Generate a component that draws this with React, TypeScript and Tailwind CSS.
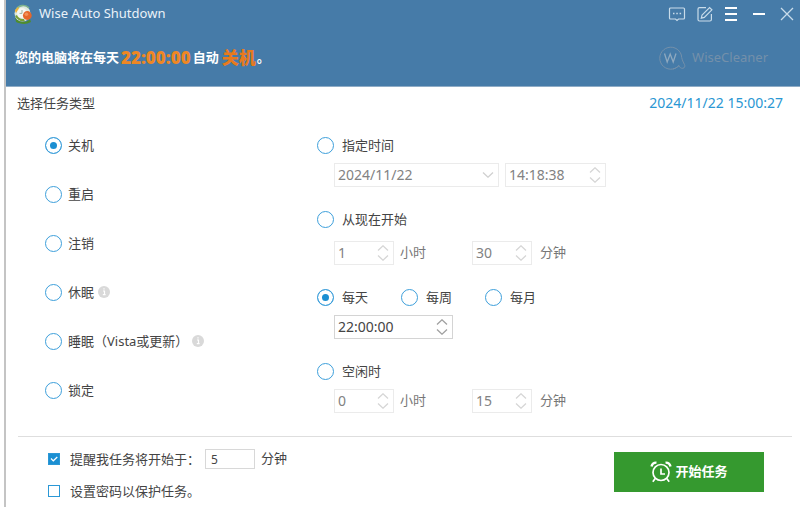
import { useState } from "react";
import type { ReactNode } from "react";
import clsx from "clsx";

const tasks = [
  { id: "shutdown", label: "关机" },
  { id: "restart", label: "重启" },
  { id: "logoff", label: "注销" },
  { id: "sleep", label: "休眠", info: "休眠说明" },
  { id: "hibernate", label: "睡眠（Vista或更新）", info: "睡眠说明" },
  { id: "lock", label: "锁定" },
];

type RadioProps = {
  name: string;
  checked: boolean;
  onChange: () => void;
  gap?: string;
  children: ReactNode;
};

function Radio({ name, checked, onChange, gap = "gap-2", children }: RadioProps) {
  return (
    <label className={clsx("flex items-center leading-5", gap)}>
      <input
        type="radio"
        name={name}
        checked={checked}
        onChange={onChange}
        className="size-[17px] shrink-0 appearance-none rounded-full border border-[#3d9fdb] bg-white checked:bg-[#1b8fd2] checked:shadow-[inset_0_0_0_4px_white]"
      />
      {children}
    </label>
  );
}

function Checkbox({ defaultChecked, children }: { defaultChecked?: boolean; children: ReactNode }) {
  return (
    <label className="flex items-center gap-[10px] leading-5">
      <span className="grid size-3 place-items-center *:col-start-1 *:row-start-1">
        <input
          type="checkbox"
          defaultChecked={defaultChecked}
          className="peer size-3 appearance-none border border-[#2b98d6] bg-white checked:bg-[#1b8fd2]"
        />
        <svg viewBox="0 0 12 12" className="pointer-events-none invisible size-3 peer-checked:visible">
          <path d="M3 5.500 5.300 7.800 9.300 4" fill="none" stroke="#fff" strokeWidth="1.200" />
        </svg>
      </span>
      {children}
    </label>
  );
}

function InfoButton({ label }: { label: string }) {
  return (
    <button type="button" aria-label={label}>
      <svg viewBox="0 0 12 12" className="size-3">
        <circle cx="6" cy="6" r="6" fill="#d9d9d9" />
        <path d="M5 5h1.5v3.5M4.8 8.7h2.8M5.4 2.9h1.2" fill="none" stroke="#fff" strokeWidth="1.2" />
      </svg>
    </button>
  );
}

function Arrow({ up }: { up?: boolean }) {
  return (
    <svg viewBox="0 0 12 6" className="h-[6px] w-3" fill="none" stroke="currentColor" strokeWidth="1.3">
      <path d={up ? "M1 5.4 6 .8l5 4.6" : "M1 .6l5 4.6L11 .6"} />
    </svg>
  );
}

type SpinnerProps = {
  label: string;
  value: string;
  width: string;
  disabled?: boolean;
};

function Spinner({ label, value, width, disabled }: SpinnerProps) {
  return (
    <div
      className={clsx(
        "flex h-6 items-center border bg-white text-sm",
        width,
        disabled ? "border-[#ebebeb] text-[#828282]" : "border-[#d4d4d4] text-[#444]"
      )}
    >
      <input
        type="text"
        aria-label={label}
        defaultValue={value}
        disabled={disabled}
        className="w-0 flex-1 bg-transparent pl-[3px]"
      />
      <div className={clsx("flex flex-col gap-1 pr-1", disabled ? "text-[#d6d6d6]" : "text-[#a0a0a0]")}>
        <button type="button" aria-label={`${label}增加`} disabled={disabled}>
          <Arrow up />
        </button>
        <button type="button" aria-label={`${label}减少`} disabled={disabled}>
          <Arrow />
        </button>
      </div>
    </div>
  );
}

function Duration({ hours, minutes }: { hours: string; minutes: string }) {
  return (
    <div className="flex items-center pl-[17px] text-[#777]">
      <Spinner label="小时" value={hours} width="w-[60px]" disabled />
      <span className="w-[78px] pl-[6px]">小时</span>
      <Spinner label="分钟" value={minutes} width="w-[60px]" disabled />
      <span className="pl-2">分钟</span>
    </div>
  );
}

function AppLogo() {
  return (
    <svg viewBox="0 0 20 20" className="size-5">
      <path d="M2 13c2 5 11 7 15 2l1 3c-5 3-11 2-15 0z" fill="#4f8d2c" />
      <circle cx="9.5" cy="9.5" r="8" fill="#dfe9df" />
      <path d="M3 6a8 8 0 0 1 13-2" fill="none" stroke="#7fb38c" strokeWidth="1.6" />
      <path d="M1.8 6.5 5 3l1 2-3 4z" fill="#f0b33a" />
      <path d="M2 12c2 4 6 6 10 5.4l-1-2.4c-3 .5-6-1-7-4z" fill="#7a9f36" />
      <circle cx="9" cy="9" r="5" fill="#f6f7f2" />
      <path d="M9 6v3.4H6.5" fill="none" stroke="#9cb6a4" strokeWidth="1" />
      <circle cx="14.3" cy="11.5" r="4.4" fill="#e5672a" />
      <circle cx="13.4" cy="10.2" r="1.8" fill="#f39158" />
    </svg>
  );
}

function TitleBar() {
  return (
    <div className="flex items-center justify-between pr-[6px] pl-[7px]">
      <div className="flex h-[27px] items-center gap-[6px]">
        <AppLogo />
        <h1 className="text-[13px] text-[#eaf2f8]">Wise Auto Shutdown</h1>
      </div>
      <div className="flex items-center gap-[10px] text-[#c9dcea]">
        <button type="button" aria-label="反馈">
          <svg viewBox="0 0 18 18" className="size-[18px]" fill="none" stroke="currentColor" strokeWidth="1.2">
            <path d="M2.5 3h13a1 1 0 0 1 1 1v9a1 1 0 0 1-1 1h-5L9 15.4 7.5 14h-5a1 1 0 0 1-1-1V4a1 1 0 0 1 1-1z" />
            <path d="M5 8.5h1.5M8.3 8.5h1.5M11.6 8.5h1.5" strokeWidth="1.6" />
          </svg>
        </button>
        <button type="button" aria-label="编辑">
          <svg viewBox="0 0 18 18" className="size-[18px]" fill="none" stroke="currentColor" strokeWidth="1.2">
            <path d="M10 2.6H3.5A1.5 1.5 0 0 0 2 4.1v10.4A1.5 1.5 0 0 0 3.5 16h10.4a1.500 1.500 0 0 0 1.500-1.500V9" />
            <path d="m6 10.2 7.6-7.7 2.3 2.3-7.6 7.6-3 .7z" />
          </svg>
        </button>
        <button type="button" aria-label="菜单" className="text-white">
          <svg viewBox="0 0 14 18" className="h-[18px] w-[14px]" stroke="currentColor" strokeWidth="2">
            <path d="M1 3h12M1 9h12M1 15h12" />
          </svg>
        </button>
        <button type="button" aria-label="最小化" className="ml-1 text-white">
          <svg viewBox="0 0 14 18" className="h-[18px] w-[14px]" stroke="currentColor" strokeWidth="2">
            <path d="M1 9h12" />
          </svg>
        </button>
        <button type="button" aria-label="关闭" className="ml-1">
          <svg viewBox="0 0 14 18" className="h-[18px] w-[14px]" stroke="currentColor" strokeWidth="1.3">
            <path d="m1 3 12 12M13 3 1 15" />
          </svg>
        </button>
      </div>
    </div>
  );
}

function Header() {
  return (
    <header className="h-[87px] border-b border-[#8facc6] bg-[#467ba8]">
      <TitleBar />
      <div className="flex h-[62px] items-center justify-between pr-8 pl-[9px]">
        <p className="flex items-center font-bold text-white">
          您的电脑将在每天
          <strong className="px-[2px] text-[17px] text-[#ee8723]">22:00:00</strong>
          自动
          <strong className="pr-px pl-[3px] text-[17px] text-[#e87a1c]">关机</strong>。
        </p>
        <div className="flex items-center gap-[6px] text-[#7490aa]">
          <svg viewBox="0 0 28 24" className="h-6 w-7" fill="none" stroke="currentColor">
            <path d="M21 19.500A11 11 0 1 1 23.300 9c.4 3.500 1.200 6 3.200 9.500.8 1.600.3 3.500-1.700 3.800-2 .2-3-.9-3.800-2.800-1.500 1.600-3.500 3-6 3.500" />
            <path d="m6.500 7.500 2.700 8.500 3-8 3 8L18 7.500" stroke="#8fa9bf" strokeWidth="1.300" />
          </svg>
          <span>WiseCleaner</span>
        </div>
      </div>
    </header>
  );
}

export default function App() {
  const [task, setTask] = useState("shutdown");
  const [mode, setMode] = useState("daily");

  return (
    <div className="min-h-screen bg-white pl-1 font-['Noto_Sans','Noto_Sans_CJK_SC',sans-serif] text-[13px] text-[#444]">
      <div className="min-h-screen border-l-2 border-[#c4c4c4]">
        <Header />
        <main>
          <div className="flex items-center justify-between pt-[6px] pr-[17px] pl-[11px] leading-5">
            <h2>选择任务类型</h2>
            <time className="text-sm text-[#2a97d3]">2024/11/22 15:00:27</time>
          </div>

          <div className="flex pt-[22px] pl-[39px]">
            <fieldset className="flex w-[272px] flex-col gap-[29px]">
              {tasks.map((t) => (
                <div key={t.id} className="flex items-center gap-1">
                  <Radio name="task" gap="gap-[6px]" checked={task === t.id} onChange={() => setTask(t.id)}>
                    {t.label}
                  </Radio>
                  {t.info && <InfoButton label={t.info} />}
                </div>
              ))}
            </fieldset>

            <fieldset className="flex flex-col gap-[22px]">
              <div className="flex flex-col gap-2">
                <Radio name="mode" checked={mode === "time"} onChange={() => setMode("time")}>
                  指定时间
                </Radio>
                <div className="flex gap-[6px] pl-[17px]">
                  <div className="relative">
                    <select
                      aria-label="日期"
                      disabled
                      className="h-6 w-[165px] appearance-none border border-[#ebebeb] bg-white pl-[3px] text-sm text-[#828282] opacity-100"
                    >
                      <option>2024/11/22</option>
                    </select>
                    <span className="pointer-events-none absolute top-[9px] right-[5px] text-[#d0d0d0]">
                      <Arrow />
                    </span>
                  </div>
                  <Spinner label="时间" value="14:18:38" width="w-[101px]" disabled />
                </div>
              </div>

              <div className="flex flex-col gap-3">
                <Radio name="mode" checked={mode === "from-now"} onChange={() => setMode("from-now")}>
                  从现在开始
                </Radio>
                <Duration hours="1" minutes="30" />
              </div>

              <div className="flex flex-col gap-2">
                <div className="flex gap-[33px]">
                  <Radio name="mode" checked={mode === "daily"} onChange={() => setMode("daily")}>
                    每天
                  </Radio>
                  <Radio name="mode" checked={mode === "weekly"} onChange={() => setMode("weekly")}>
                    每周
                  </Radio>
                  <Radio name="mode" checked={mode === "monthly"} onChange={() => setMode("monthly")}>
                    每月
                  </Radio>
                </div>
                <div className="pl-[17px]">
                  <Spinner label="每天时间" value="22:00:00" width="w-[119px]" />
                </div>
              </div>

              <div className="flex flex-col gap-2">
                <Radio name="mode" checked={mode === "idle"} onChange={() => setMode("idle")}>
                  空闲时
                </Radio>
                <Duration hours="0" minutes="15" />
              </div>
            </fieldset>
          </div>
        </main>

        <footer className="mr-2 ml-3 mt-[23px] flex items-start justify-between border-t border-[#dedede] pt-3 pr-7 pl-[30px]">
          <div className="flex flex-col gap-3">
            <div className="flex items-center">
              <Checkbox defaultChecked>提醒我任务将开始于：</Checkbox>
              <input
                type="text"
                aria-label="提前分钟数"
                defaultValue="5"
                className="ml-[5px] h-5 w-[50px] border border-[#d8d8d8] pl-[5px] text-xs"
              />
              <span className="pl-[6px]">分钟</span>
            </div>
            <Checkbox>设置密码以保护任务。</Checkbox>
          </div>

          <button
            type="button"
            className="mt-[3px] flex h-10 w-[150px] items-center justify-center gap-[3px] bg-[#35992f] font-bold text-white"
          >
            <svg viewBox="0 0 22 22" className="size-[22px]" fill="none" stroke="currentColor" strokeWidth="1.7">
              <circle cx="11" cy="11.5" r="8" />
              <path d="M11 7.5V13h4M5.2 17.5l-2.4 3.3M16.8 17.5l2.4 3.3" />
              <path d="M1.500 5.500C2 3 4 1.500 6.500 1.600M20.500 5.500C20 3 18 1.500 15.500 1.600" strokeWidth="2.400" />
            </svg>
            开始任务
          </button>
        </footer>
      </div>
    </div>
  );
}
